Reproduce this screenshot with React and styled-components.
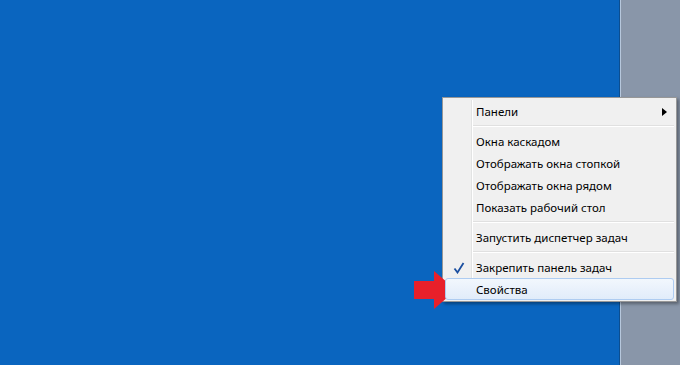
import styled, { createGlobalStyle } from "styled-components";

const Global = createGlobalStyle`
  html, body {
    margin: 0;
    padding: 0;
    width: 680px;
    height: 365px;
    overflow: hidden;
  }
  body {
    font-family: "Noto Sans", "Open Sans", sans-serif;
  }
`;

const Screen = styled.div`
  position: relative;
  display: flex;
  width: 680px;
  height: 365px;
`;

const Desktop = styled.div`
  flex: 1;
  background: #0a65bf;
`;

const Taskbar = styled.div`
  width: 60px;
  background: #8996a9;
  border-left: 1px solid #0b4e91;
  box-shadow: inset 1px 0 0 #b6c7dc;
`;

const Menu = styled.div`
  position: absolute;
  left: 442px;
  top: 97px;
  width: 233px;
  padding: 2px 0 1px;
  background: #f0f0f0;
  border: 1px solid #979797;
  box-shadow: 2px 2px 3px rgba(0, 0, 0, 0.35);
  display: flex;
  flex-direction: column;
  &::before {
    content: "";
    position: absolute;
    left: 28px;
    top: 2px;
    bottom: 2px;
    width: 1px;
    background: #e2e3e3;
    box-shadow: 1px 0 0 #ffffff;
  }
`;

const Item = styled.div`
  position: relative;
  height: 22px;
  margin: 0 2px;
  display: flex;
  align-items: center;
  padding-left: 30px;
  font-size: 11.5px;
  color: #000;
  border: 1px solid ${(p) => (p.$hover ? "#aeccf1" : "transparent")};
  border-radius: 3px;
  box-sizing: border-box;
  background: ${(p) =>
    p.$hover ? "linear-gradient(#f2f7fd, #e1ecfa)" : "transparent"};
  z-index: 1;
`;

const Separator = styled.div`
  height: 1px;
  margin: 3px 2px 3px 30px;
  background: #e0e0e0;
  border-bottom: 1px solid #ffffff;
`;

const Check = styled.svg`
  position: absolute;
  left: 7px;
  top: 5px;
`;

const SubArrow = styled.svg`
  position: absolute;
  right: 6px;
  top: 7px;
`;

const Pointer = styled.svg`
  position: absolute;
  left: 414px;
  top: 271px;
`;

export default function App() {
  return (
    <Screen>
      <Global />
      <Desktop />
      <Taskbar />
      <Menu>
        <Item>
          Панели
          <SubArrow width="5" height="8" viewBox="0 0 5 8">
            <path d="M0 0 L5 4 L0 8 Z" fill="#000" />
          </SubArrow>
        </Item>
        <Separator />
        <Item>Окна каскадом</Item>
        <Item>Отображать окна стопкой</Item>
        <Item>Отображать окна рядом</Item>
        <Item>Показать рабочий стол</Item>
        <Separator />
        <Item>Запустить диспетчер задач</Item>
        <Separator />
        <Item>
          <Check width="12" height="12" viewBox="0 0 12 12">
            <path
              d="M1.5 6.5 L4.5 10.5 L10.5 1"
              fill="none"
              stroke="#1b4fa0"
              strokeWidth="1.8"
            />
          </Check>
          Закрепить панель задач
        </Item>
        <Item $hover>Свойства</Item>
      </Menu>
      <Pointer width="42" height="38" viewBox="0 0 42 38">
        <path d="M0 10 H20 V0 L42 19 L20 38 V28 H0 Z" fill="#e8202a" />
      </Pointer>
    </Screen>
  );
}
